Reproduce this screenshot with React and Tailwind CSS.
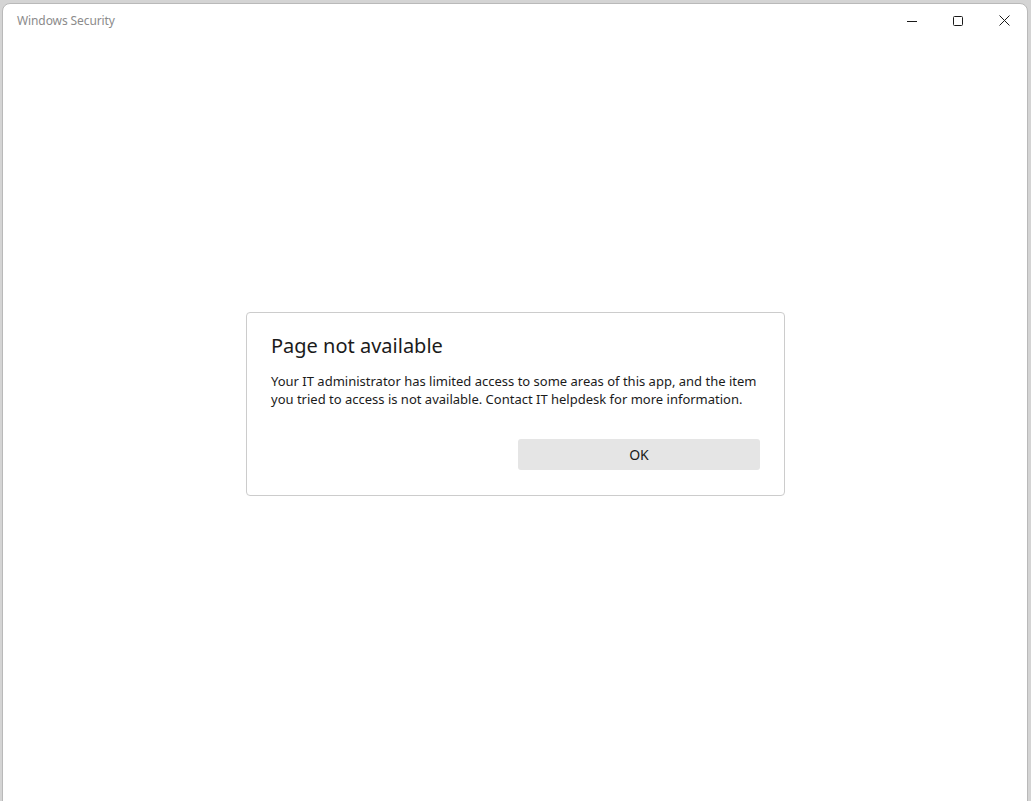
import React from 'react';

const TitleBar = () => (
    <div className="flex items-center h-[33px] shrink-0">
        <div className="pl-[14px] text-[12px] text-[#8b8b8b] flex-1 pt-[1px] tracking-[-0.1px]">Windows Security</div>
        <div className="flex h-full">
            <button className="w-[46px] h-full flex items-center justify-center">
                <svg width="10" height="10" viewBox="0 0 10 10"><path d="M0 5.5h10" stroke="#1a1a1a" strokeWidth="1" /></svg>
            </button>
            <button className="w-[46px] h-full flex items-center justify-center">
                <svg width="10" height="10" viewBox="0 0 10 10"><rect x="0.5" y="0.5" width="9" height="9" rx="1" fill="none" stroke="#1a1a1a" strokeWidth="1" /></svg>
            </button>
            <button className="w-[46px] h-full flex items-center justify-center">
                <svg width="11" height="11" viewBox="0 0 11 11"><path d="M0.5 0.5l10 10M10.5 0.5l-10 10" stroke="#1a1a1a" strokeWidth="1" /></svg>
            </button>
        </div>
    </div>
);

export default function App() {
    return (
        <div className="w-[1031px] h-[801px] overflow-hidden bg-[#d4d4d4] pl-[2px] pt-[3px] pr-[3px]" style={{ fontFamily: '"Noto Sans", "Open Sans", sans-serif' }}>
            <div className="h-[820px] bg-white border border-[#b9b9b9] rounded-t-[8px] flex flex-col">
                <TitleBar />
                <div className="flex justify-center pt-[275px] pl-[1px]">
                    <div className="w-[539px] h-[184px] border border-[#cccccc] rounded-[4px] bg-white pl-[24px] pr-[24px] pt-[20px] flex flex-col">
                        <h1 className="text-[20px] leading-[26px] text-[#1b1b1b]">Page not available</h1>
                        <p className="mt-[13px] text-[13px] leading-[18px] text-[#1b1b1b]">
                            Your IT administrator has limited access to some areas of this app, and the item you tried to access is not available. Contact IT helpdesk for more information.
                        </p>
                        <div className="flex justify-end mt-[31px]">
                            <button className="w-[242px] h-[31px] rounded-[3px] bg-[#e5e5e5] text-[14px] text-[#1b1b1b]">OK</button>
                        </div>
                    </div>
                </div>
            </div>
        </div>
    );
}
